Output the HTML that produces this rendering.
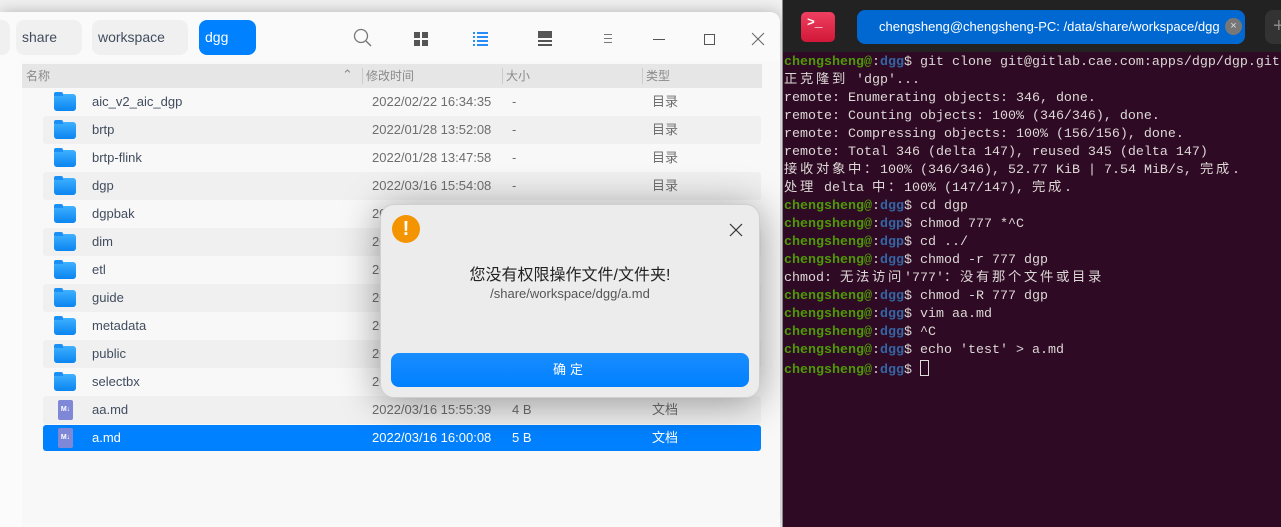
<!DOCTYPE html>
<html><head><meta charset="utf-8"><style>
*{margin:0;padding:0;box-sizing:border-box}
body{width:1281px;height:527px;overflow:hidden;background:#f0f0f0;position:relative;font-family:"Liberation Sans","Noto Sans CJK SC",sans-serif}
.fm{position:absolute;left:0;top:12px;width:780px;height:515px;background:#f8f8f8;border-radius:0 10px 0 0;box-shadow:0 0 14px rgba(0,0,0,.25)}
.side{position:absolute;left:0;top:50px;width:22px;height:465px;background:#fbfbfb}
.top{position:absolute;left:0;top:0;width:780px;height:50px;background:#fafafa;border-radius:0 10px 0 0}
.crumb{position:absolute;top:8px;height:35px;border-radius:8px;background:#f0f0f0;font-size:14px;color:#414d5e;line-height:35px;padding-left:6px}
.ic{position:absolute;top:18px}
.hdr{position:absolute;left:22px;top:52px;width:740px;height:24px;background:#e6e6e6;font-size:12px;color:#8a8a8a;line-height:24px}
.hdr span{position:absolute}
.hdr i{position:absolute;top:4px;width:1px;height:16px;background:#ccc}
.row{position:absolute;left:43px;width:718px;height:28px;font-size:13px;color:#414d5e;line-height:28px;border-radius:3px}
.row.alt{background:#f0f0f0}
.row.sel{background:#0081ff;color:#fff}
.row span{position:absolute}
.row .d{left:329px;color:#6e6e6e}.row .s{left:469px;color:#6e6e6e}.row .t{left:609px;color:#6e6e6e}
.row.sel .d,.row.sel .s,.row.sel .t{color:#fff}
.fold{position:absolute;left:11px;top:6px;width:22px;height:17px;border-radius:3px;background:linear-gradient(#3fb1ff,#0a84f0)}
.fold:before{content:"";position:absolute;left:0;top:-2px;width:9px;height:4px;background:#1a8ff5;border-radius:2px 2px 0 0}
.md{position:absolute;left:15px;top:4px;width:15px;height:20px;border-radius:2px;background:#7f88d6;color:#fff;font-size:7px;line-height:20px;text-align:center;font-weight:bold}
.dlg{position:absolute;left:380px;top:204px;width:380px;height:194px;background:#ececec;border-radius:14px;box-shadow:0 4px 40px rgba(0,0,0,.4);border:1px solid #d0d0d0}
.term{position:absolute;left:782px;top:0;width:499px;height:527px;background:#2f0a24;border-left:1px solid #888}
.th{position:absolute;left:0;top:0;width:499px;height:52px;background:#222}
.tl{position:absolute;left:1px;font-family:"Liberation Mono","Noto Sans CJK SC",monospace;font-size:13.33px;color:#dcd8d6;white-space:pre;line-height:18px;height:18px;overflow:hidden}
.c{letter-spacing:2.67px;font-family:"Noto Sans CJK SC",monospace;display:inline-block;height:18px;line-height:18px;vertical-align:top;position:relative;top:-3px}
.g{color:#4e9a06;font-weight:bold}.b{color:#3465a4;font-weight:bold}
</style></head><body>
<div class="fm">
<div class="top">
 <div class="crumb" style="left:0;width:10px;border-radius:0 8px 8px 0"></div>
 <div class="crumb" style="left:16px;width:66px">share</div>
 <div class="crumb" style="left:92px;width:96px">workspace</div>
 <div class="crumb" style="left:199px;width:57px;background:#0081ff;color:#fff">dgg</div>
 <svg class="ic" style="left:353px;top:16px" width="20" height="20"><circle cx="8" cy="8" r="6.5" fill="none" stroke="#777" stroke-width="1.3"/><line x1="13" y1="13" x2="18" y2="18" stroke="#777" stroke-width="1.4"/></svg>
 <svg class="ic" style="left:413px;top:19px" width="16" height="16"><rect x="1" y="1" width="6" height="6" fill="#555"/><rect x="9" y="1" width="6" height="6" fill="#555"/><rect x="1" y="9" width="6" height="6" fill="#555"/><rect x="9" y="9" width="6" height="6" fill="#555"/></svg>
 <svg class="ic" style="left:473px;top:19px" width="16" height="16" fill="#2a8df5"><rect x="0" y="1" width="2" height="2"/><rect x="4" y="1" width="11" height="2"/><rect x="0" y="5" width="2" height="2"/><rect x="4" y="5" width="11" height="2"/><rect x="0" y="9" width="2" height="2"/><rect x="4" y="9" width="11" height="2"/><rect x="0" y="13" width="2" height="2"/><rect x="4" y="13" width="11" height="2"/></svg>
 <svg class="ic" style="left:537px;top:19px" width="16" height="16" fill="#555"><rect x="1" y="0" width="14" height="7"/><rect x="1" y="9" width="14" height="2"/><rect x="1" y="13" width="14" height="2"/></svg>
 <svg class="ic" style="left:601px;top:20px" width="14" height="14" stroke="#777" stroke-width="1"><line x1="3" y1="2.5" x2="11" y2="2.5"/><line x1="3" y1="6.5" x2="11" y2="6.5"/><line x1="3" y1="10.5" x2="11" y2="10.5"/></svg>
 <svg class="ic" style="left:651px;top:20px" width="16" height="14"><line x1="2" y1="7.5" x2="14" y2="7.5" stroke="#555" stroke-width="1"/></svg>
 <svg class="ic" style="left:701px;top:20px" width="16" height="14"><rect x="3.5" y="2.5" width="10" height="10" fill="none" stroke="#555"/></svg>
 <svg class="ic" style="left:750px;top:19px" width="16" height="16" stroke="#666" stroke-width="1"><line x1="2" y1="2" x2="14" y2="14"/><line x1="14" y1="2" x2="2" y2="14"/></svg>
</div>
<div class="side"></div>
<div class="hdr" style="top:52px"><span style="left:4px">名称</span><span style="left:320px;top:-1px;font-size:13px">⌃</span><i style="left:340px"></i><span style="left:344px">修改时间</span><i style="left:480px"></i><span style="left:484px">大小</span><i style="left:620px"></i><span style="left:624px">类型</span></div>
</div>
<div style="position:absolute;left:0;top:0">
<div class="row" style="top:88px"><div class="fold"></div><span style="left:49px">aic_v2_aic_dgp</span><span class="d">2022/02/22 16:34:35</span><span class="s">-</span><span class="t">目录</span></div>
<div class="row alt" style="top:116px"><div class="fold"></div><span style="left:49px">brtp</span><span class="d">2022/01/28 13:52:08</span><span class="s">-</span><span class="t">目录</span></div>
<div class="row" style="top:144px"><div class="fold"></div><span style="left:49px">brtp-flink</span><span class="d">2022/01/28 13:47:58</span><span class="s">-</span><span class="t">目录</span></div>
<div class="row alt" style="top:172px"><div class="fold"></div><span style="left:49px">dgp</span><span class="d">2022/03/16 15:54:08</span><span class="s">-</span><span class="t">目录</span></div>
<div class="row" style="top:200px"><div class="fold"></div><span style="left:49px">dgpbak</span><span class="d">2022/03/16 15:54:08</span></div>
<div class="row alt" style="top:228px"><div class="fold"></div><span style="left:49px">dim</span><span class="d">2022/03/16 15:54:08</span></div>
<div class="row" style="top:256px"><div class="fold"></div><span style="left:49px">etl</span><span class="d">2022/03/16 15:54:08</span></div>
<div class="row alt" style="top:284px"><div class="fold"></div><span style="left:49px">guide</span><span class="d">2022/03/16 15:54:08</span></div>
<div class="row" style="top:312px"><div class="fold"></div><span style="left:49px">metadata</span><span class="d">2022/03/16 15:54:08</span></div>
<div class="row alt" style="top:340px"><div class="fold"></div><span style="left:49px">public</span><span class="d">2022/03/16 15:54:08</span></div>
<div class="row" style="top:368px"><div class="fold"></div><span style="left:49px">selectbx</span><span class="d">2022/03/16 15:54:08</span></div>
<div class="row alt" style="top:396px"><div class="md">M↓</div><span style="left:49px">aa.md</span><span class="d">2022/03/16 15:55:39</span><span class="s">4 B</span><span class="t">文档</span></div>
<div class="row sel" style="top:425px;height:26px;line-height:26px"><div class="md" style="top:3px">M↓</div><span style="left:49px">a.md</span><span class="d">2022/03/16 16:00:08</span><span class="s">5 B</span><span class="t">文档</span></div>
</div>
<div class="dlg">
 <div style="position:absolute;left:11px;top:10px;width:28px;height:28px;border-radius:50%;background:#f39400;color:#fff;font-weight:bold;font-size:20px;text-align:center;line-height:28px">!</div>
 <svg style="position:absolute;left:348px;top:18px" width="14" height="14" stroke="#333" stroke-width="1.2"><line x1="1" y1="1" x2="13" y2="13"/><line x1="13" y1="1" x2="1" y2="13"/></svg>
 <div style="position:absolute;left:0;width:378px;top:56px;text-align:center;font-size:16px;color:#222">您没有权限操作文件/文件夹!</div>
 <div style="position:absolute;left:0;width:378px;top:81px;text-align:center;font-size:13px;color:#555">/share/workspace/dgg/a.md</div>
 <div style="position:absolute;left:10px;top:148px;width:358px;height:34px;border-radius:8px;background:linear-gradient(#1a8dff,#0080ff);color:#fff;text-align:center;line-height:34px;font-size:13px;letter-spacing:4px">确定</div>
</div>
<div class="term">
<div class="th">
 <div style="position:absolute;left:18px;top:12px;width:34px;height:30px;border-radius:5px;background:linear-gradient(#f04060,#d01838);color:#fff;font-family:'Liberation Mono',monospace;font-size:13px;padding:3px 0 0 6px;font-weight:bold">&gt;_</div>
 <div style="position:absolute;left:74px;top:10px;width:388px;height:34px;border-radius:8px;background:#0068d0;color:#fff;font-size:13px;line-height:34px;padding-left:22px;white-space:nowrap;overflow:hidden">chengsheng@chengsheng-PC: /data/share/workspace/dgg</div>
 <span style="position:absolute;left:442px;top:18px;width:17px;height:17px;border-radius:50%;background:#777;color:#ddd;font-size:11px;line-height:17px;text-align:center">×</span>
 <div style="position:absolute;left:482px;top:10px;width:30px;height:34px;border-radius:8px;background:#333;color:#888;font-size:20px;line-height:32px;padding-left:8px">+</div>
</div>
<div style="position:absolute;left:0;top:1px">
<div class="tl" style="top:53px"><span class="g">chengsheng@</span>:<span class="b">dgg</span>$ git clone git@gitlab.cae.com:apps/dgp/dgp.git</div>
<div class="tl" style="top:71px"><span class="c">正克隆到</span> 'dgp'...</div>
<div class="tl" style="top:89px">remote: Enumerating objects: 346, done.</div>
<div class="tl" style="top:107px">remote: Counting objects: 100% (346/346), done.</div>
<div class="tl" style="top:125px">remote: Compressing objects: 100% (156/156), done.</div>
<div class="tl" style="top:143px">remote: Total 346 (delta 147), reused 345 (delta 147)</div>
<div class="tl" style="top:161px"><span class="c">接收对象中：</span>100% (346/346), 52.77 KiB | 7.54 MiB/s, <span class="c">完成</span>.</div>
<div class="tl" style="top:179px"><span class="c">处理</span> delta <span class="c">中：</span>100% (147/147), <span class="c">完成</span>.</div>
<div class="tl" style="top:197px"><span class="g">chengsheng@</span>:<span class="b">dgg</span>$ cd dgp</div>
<div class="tl" style="top:215px"><span class="g">chengsheng@</span>:<span class="b">dgp</span>$ chmod 777 *^C</div>
<div class="tl" style="top:233px"><span class="g">chengsheng@</span>:<span class="b">dgp</span>$ cd ../</div>
<div class="tl" style="top:251px"><span class="g">chengsheng@</span>:<span class="b">dgg</span>$ chmod -r 777 dgp</div>
<div class="tl" style="top:269px">chmod: <span class="c">无法访问</span>'777'<span class="c">：没有那个文件或目录</span></div>
<div class="tl" style="top:287px"><span class="g">chengsheng@</span>:<span class="b">dgg</span>$ chmod -R 777 dgp</div>
<div class="tl" style="top:305px"><span class="g">chengsheng@</span>:<span class="b">dgg</span>$ vim aa.md</div>
<div class="tl" style="top:323px"><span class="g">chengsheng@</span>:<span class="b">dgg</span>$ ^C</div>
<div class="tl" style="top:341px"><span class="g">chengsheng@</span>:<span class="b">dgg</span>$ echo 'test' &gt; a.md</div>
<div class="tl" style="top:359px"><span class="g">chengsheng@</span>:<span class="b">dgg</span>$ <span style="display:inline-block;width:9px;height:16px;border:1px solid #ddd;vertical-align:-3px"></span></div>
</div>
</div>
</body></html>
